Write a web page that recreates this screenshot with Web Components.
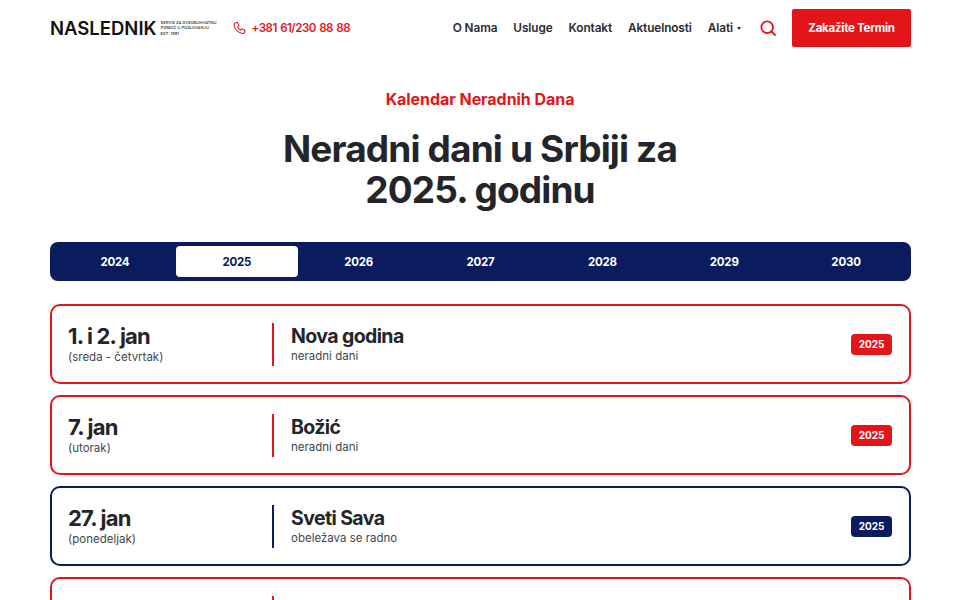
<!DOCTYPE html>
<html lang="sr">
<head>
<meta charset="utf-8">
<title>Neradni dani u Srbiji za 2025. godinu</title>
<style>
    html, body { margin: 0; padding: 0; background: #fff; overflow: hidden; height: 600px; }
    body { font-family: Inter, "Noto Sans", sans-serif; color: #24252b; }
</style>
</head>
<body>
<site-header></site-header>
<page-title eyebrow="Kalendar Neradnih Dana">Neradni dani u Srbiji za<br>2025. godinu</page-title>
<year-tabs active="2025"></year-tabs>
<holiday-list>
    <holiday-card date="1. i 2. jan" day="(sreda - četvrtak)" name="Nova godina" note="neradni dani" year="2025"></holiday-card>
    <holiday-card date="7. jan" day="(utorak)" name="Božić" note="neradni dani" year="2025"></holiday-card>
    <holiday-card date="27. jan" day="(ponedeljak)" name="Sveti Sava" note="obeležava se radno" year="2025" kind="work"></holiday-card>
    <!-- only the top edge of the fourth row is in the frame -->
    <holiday-card></holiday-card>
</holiday-list>

<script>
// site header: logo, phone, nav, button
class SiteHeader extends HTMLElement {
    constructor() {
        super();
        const shadow = this.attachShadow({ mode: 'open' });
        shadow.innerHTML = `
            <style>
                :host { display: flex; align-items: center; height: 38px; padding: 9px 49px 0 50px; font-family: Inter, sans-serif; }
                .logo { display: flex; align-items: center; gap: 4px; }
                .logo b { font-size: 18.500px; font-weight: 600; color: #111; letter-spacing: 0; line-height: 20px; }
                .logo small { font-size: 4.100px; line-height: 5.600px; color: #333; width: 55px; white-space: nowrap; font-weight: 500; }
                .phone { display: flex; align-items: center; gap: 6px; margin-left: 17px; color: #e31519; font-size: 11.500px; font-weight: 600; letter-spacing: -0.5px; word-spacing: 1px; }
                nav { display: flex; align-items: center; gap: 16px; margin-left: auto; font-size: 11.800px; font-weight: 600; color: #2a2b33; letter-spacing: -0.1px; }
                .caret { display: inline-block; margin-left: 4px; vertical-align: 2px; border: 2.500px solid transparent; border-top: 3px solid #2a2b33; border-bottom: 0; }
                svg { display: block; }
                .search { margin-left: 19px; }
                .cta { margin-left: 16px; width: 119px; height: 38px; background: #e31519; color: #fff; border-radius: 2px; display: flex; align-items: center; justify-content: center; font-size: 11.500px; font-weight: 700; letter-spacing: -0.25px; }
            </style>
            <div class="logo"><b>NASLEDNIK</b><small>SERVIS ZA SVEOBUHVATNU<br>POMOĆ U POSLOVANJU<br>EST. 1991</small></div>
            <div class="phone">
                <svg width="13" height="14" viewBox="0 0 24 24" fill="none" stroke="#e31519" stroke-width="1.900" stroke-linejoin="round"><path d="M5 2.500 8.500 2l2.500 6-2.500 2c1 2.600 3 4.800 5.500 6l2-2.500 6 2.500-.5 3.500c-.3 1.800-2 3-3.800 2.700C9.500 21.300 3.300 14.700 2.200 6.300 2 4.500 3.200 2.800 5 2.500Z"/></svg>
                <span>+381 61/230 88 88</span>
            </div>
            <nav>
                <span>O Nama</span><span>Usluge</span><span>Kontakt</span><span>Aktuelnosti</span>
                <span>Alati<i class="caret"></i></span>
            </nav>
            <svg class="search" width="16" height="16" viewBox="0 0 16 16" fill="none" stroke="#e31519" stroke-width="1.800" stroke-linecap="round"><circle cx="7.200" cy="7.200" r="5.800"/><path d="M11.500 11.500 15 15"/></svg>
            <div class="cta">Zakažite Termin</div>
        `;
    }
}

class PageTitle extends HTMLElement {
    constructor() {
        super();
        const shadow = this.attachShadow({ mode: 'open' });
        shadow.innerHTML = `
            <style>
                :host { display: block; text-align: center; padding-top: 42px; font-family: Inter, sans-serif; }
                p { margin: 0; font-size: 16px; line-height: 20px; font-weight: 700; color: #e31519; letter-spacing: -0.05px; }
                h1 { margin: 19px 0 0; font-size: 37px; line-height: 41px; font-weight: 700; color: #24252b; letter-spacing: -0.85px; }
            </style>
            <p></p>
            <h1><slot></slot></h1>
        `;
        shadow.querySelector('p').textContent = this.getAttribute('eyebrow');
    }
}

class YearTabs extends HTMLElement {
    constructor() {
        super();
        const shadow = this.attachShadow({ mode: 'open' });
        const active = this.getAttribute('active');
        const years = ['2024', '2025', '2026', '2027', '2028', '2029', '2030'];
        shadow.innerHTML = `
            <style>
                :host { display: grid; grid-template-columns: repeat(7, 1fr); margin: 32px 49.500px 0; padding: 4px 3.500px 4px 4.500px; height: 31px; background: #0a1c5e; border-radius: 8px; font-family: Inter, sans-serif; }
                span { display: flex; align-items: center; justify-content: center; border-radius: 4px; color: #fff; font-size: 11.500px; font-weight: 700; letter-spacing: -0.2px; }
                span.on { background: #fff; color: #0a1c5e; }
            </style>
            ${years.map(y => `<span class="${y === active ? 'on' : ''}">${y}</span>`).join('')}
        `;
    }
}

class HolidayList extends HTMLElement {
    constructor() {
        super();
        const shadow = this.attachShadow({ mode: 'open' });
        shadow.innerHTML = `
            <style>
                :host { display: flex; flex-direction: column; gap: 11px; margin: 23px 49.500px 0; }
            </style>
            <slot></slot>
        `;
    }
}

// one row of the calendar, kind="work" switches it to navy
class HolidayCard extends HTMLElement {
    constructor() {
        super();
        const shadow = this.attachShadow({ mode: 'open' });
        const accent = this.getAttribute('kind') === 'work' ? '#0a1c5e' : '#e31519';
        const year = this.getAttribute('year');
        shadow.innerHTML = `
            <style>
                :host { display: flex; align-items: center; box-sizing: border-box; height: 80px; padding: 0 16.500px; border: 2px solid ${accent}; border-radius: 10px; font-family: Inter, sans-serif; color: #24252b; }
                .date { width: 204px; }
                .bar { width: 2px; height: 43px; background: ${accent}; }
                .info { margin-left: 17px; flex: 1; }
                b { display: block; font-size: 21px; line-height: 24px; font-weight: 700; letter-spacing: -0.6px; }
                .date b { font-size: 22px; letter-spacing: -0.8px; margin-top: -1px; }
                .date small { margin-top: 2px; }
                .info b { font-size: 19.500px; margin-top: -1px; }
                small { display: block; font-size: 11.500px; line-height: 14px; margin-top: 1px; color: #44454c; }
                .badge { width: 41px; height: 21px; display: flex; align-items: center; justify-content: center; border-radius: 4px; background: ${accent}; color: #fff; font-size: 10px; font-weight: 700; }
            </style>
            <div class="date"><b></b><small></small></div>
            <div class="bar"></div>
            <div class="info"><b></b><small></small></div>
            ${year ? '<div class="badge"></div>' : ''}
        `;
        if (year) {
            shadow.querySelector('.date b').textContent = this.getAttribute('date');
            shadow.querySelector('.date small').textContent = this.getAttribute('day');
            shadow.querySelector('.info b').textContent = this.getAttribute('name');
            shadow.querySelector('.info small').textContent = this.getAttribute('note');
            shadow.querySelector('.badge').textContent = year;
        }
    }
}

customElements.define('site-header', SiteHeader);
customElements.define('page-title', PageTitle);
customElements.define('year-tabs', YearTabs);
customElements.define('holiday-list', HolidayList);
customElements.define('holiday-card', HolidayCard);
</script>
</body>
</html>
